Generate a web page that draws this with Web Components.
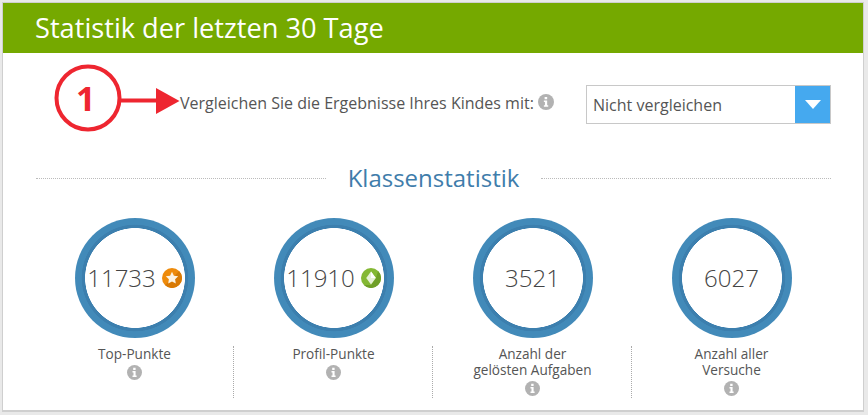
<!DOCTYPE html>
<html lang="de">
<head>
<meta charset="utf-8">
<title>Statistik</title>
<style>
  html, body { margin: 0; background: #e9e9e9; }
  body { width: 868px; height: 415px; overflow: hidden; font-family: "Open Sans", sans-serif; color: #555; }
</style>
</head>
<body>
<stats-panel heading="Statistik der letzten 30 Tage">
  <compare-row label="Vergleichen Sie die Ergebnisse Ihres Kindes mit:" value="Nicht vergleichen"></compare-row>
  <section-title>Klassenstatistik</section-title>
  <div slot="stats">
    <stat-item value="11733" badge="star">Top-Punkte</stat-item>
    <stat-item value="11910" badge="gem">Profil-Punkte</stat-item>
    <stat-item value="3521">Anzahl der<br>gelösten Aufgaben</stat-item>
    <stat-item value="6027" last>Anzahl aller<br>Versuche</stat-item>
  </div>
</stats-panel>

<script>
const INFO_ICON = `<svg class="info" width="15" height="15" viewBox="0 0 15 15">
  <circle cx="7.5" cy="7.5" r="7.5" fill="#b2b2b2"/>
  <path d="M6.2 2.8h2.4v2.1H6.2zM5.5 6.1h3.1v4.5h1v1.4H5.5v-1.4h1V7.5h-1z" fill="#fff"/>
</svg>`;

class StatsPanel extends HTMLElement {
  constructor() {
    super();
    this.attachShadow({mode: 'open'});
  }

  connectedCallback() {
    this.shadowRoot.innerHTML = `
    <style>
      :host {
        display: block;
        box-sizing: border-box;
        width: 862px;
        height: 410px;
        margin: 2px 0 0 2px;
        background: #fff;
        border: solid #cfcfcf;
        border-width: 1px 1px 2px 1px;
      }
      h1 {
        margin: 0;
        height: 50px;
        padding-left: 32px;
        background: #75a900;
        color: #fff;
        font: 400 27.2px/50px "Open Sans", sans-serif;
      }
      .stats { display: block; padding: 0 32px; }
      ::slotted([slot=stats]) { display: flex; }
    </style>
    <h1>${this.getAttribute('heading')}</h1>
    <slot></slot>
    <div class="stats"><slot name="stats"></slot></div>`;
  }
}

class CompareRow extends HTMLElement {
  constructor() {
    super();
    this.attachShadow({mode: 'open'});
  }

  connectedCallback() {
    this.shadowRoot.innerHTML = `
    <style>
      :host {
        display: flex;
        position: relative;
        align-items: center;
        height: 39px;
        padding: 32px 32px 0 177px;
        font-size: 16px;
        color: #555;
      }
      .label { display: flex; align-items: center; gap: 4px; margin-top: -4px; white-space: nowrap; }
      .info { display: block; margin-top: -2px; width: 16px; height: 16px; }
      .select {
        box-sizing: border-box;
        display: flex;
        width: 245px;
        height: 39px;
        margin-left: auto;
        border: 1px solid #c8c8c8;
      }
      .select span { flex: 1; padding-left: 6px; font-size: 16px; line-height: 38px; }
      .select i { display: flex; align-items: center; justify-content: center; width: 35px; background: #45a9ef; }
      .callout { position: absolute; left: 51px; top: 11px; }
      .num { position: absolute; left: 73px; top: 28px; color: #ee2630; font: 700 34px/1 "Open Sans", sans-serif; }
    </style>
    <svg class="callout" width="126" height="68" viewBox="0 0 126 68">
      <circle cx="34" cy="34" r="31.5" fill="#fff" stroke="#ee2630" stroke-width="4"/>
      <path d="M66 36.5h36" stroke="#ee2630" stroke-width="4"/>
      <path d="M102 24l23.5 13L102 50z" fill="#ee2630"/>
    </svg>
    <span class="num">1</span>
    <span class="label">${this.getAttribute('label')} ${INFO_ICON}</span>
    <div class="select">
      <span>${this.getAttribute('value')}</span>
      <i><svg width="16" height="9" viewBox="0 0 16 9"><path d="M0 0h16L8 9z" fill="#fff"/></svg></i>
    </div>`;
  }
}

class SectionTitle extends HTMLElement {
  constructor() {
    super();
    this.attachShadow({mode: 'open'});
    this.shadowRoot.innerHTML = `
    <style>
      :host {
        display: flex;
        align-items: center;
        gap: 22px;
        margin: 37px 32px 0 33px;
        height: 34px;
        color: #3f7dab;
        font-size: 24px;
        line-height: 34px;
      }
      i { flex: 1; border-top: 1px dotted #bbb; }
    </style>
    <i></i><slot></slot><i></i>`;
  }
}

class StatItem extends HTMLElement {
  constructor() {
    super();
    this.attachShadow({mode: 'open'});
  }

  badge(kind) {
    if (kind === 'star') {
      return `<svg class="badge" width="20" height="20" viewBox="0 0 20 20">
        <circle cx="10" cy="10" r="10" fill="#ee8b0b"/>
        <path d="M17.1 2.9A10 10 0 0 1 2.9 17.1l3-2.6 4-2 3.8-6z" fill="#d97a04"/>
        <path d="M10 3.8l1.9 3.9 4.3.6-3.1 3 .7 4.3-3.8-2-3.8 2 .7-4.3-3.1-3 4.3-.6z" fill="#fdf4e3"/>
      </svg>`;
    }
    if (kind === 'gem') {
      return `<svg class="badge" width="20" height="20" viewBox="0 0 20 20">
        <circle cx="10" cy="10" r="10" fill="#84b834"/>
        <path d="M17.1 2.9A10 10 0 0 1 2.9 17.1l7.1-.1 5-7z" fill="#6f9f28"/>
        <path d="M10 3.5l4.8 6.5-4.8 6.5L5.2 10z" fill="#e6f1d6"/>
        <path d="M10 3.5l4.8 6.5H10z" fill="#fff"/>
      </svg>`;
    }
    return '';
  }

  connectedCallback() {
    const last = this.hasAttribute('last');
    this.shadowRoot.innerHTML = `
    <style>
      :host {
        display: block;
        position: relative;
        flex: 0 0 199px;
        text-align: center;
        padding-top: 23px;
        font-size: 13.6px;
        line-height: 16px;
        color: #555;
      }
      .ring {
        display: flex;
        align-items: center;
        justify-content: center;
        gap: 6px;
        width: 120px;
        height: 120px;
        margin: 0 auto;
        border-radius: 50%;
        background: radial-gradient(circle closest-side, #fff 49.6px, #3c7fae 50.2px, #3c7fae 53px, #428ab9 53.6px);
        font-size: 24px;
        font-weight: 300;
        color: #444;
      }
      .badge { flex: none; }
      .label { margin-top: 8px; }
      .info { display: block; margin: 3px auto 0; }
      .rule { position: absolute; right: 0; top: 151px; height: 52px; border-right: 1px dotted #aaa; }
    </style>
    <div class="ring"><span>${this.getAttribute('value')}</span>${this.badge(this.getAttribute('badge'))}</div>
    <div class="label"><slot></slot></div>
    ${INFO_ICON}
    ${last ? '' : '<div class="rule"></div>'}`;
  }
}

customElements.define('stats-panel', StatsPanel);
customElements.define('compare-row', CompareRow);
customElements.define('section-title', SectionTitle);
customElements.define('stat-item', StatItem);
</script>
</body>
</html>
